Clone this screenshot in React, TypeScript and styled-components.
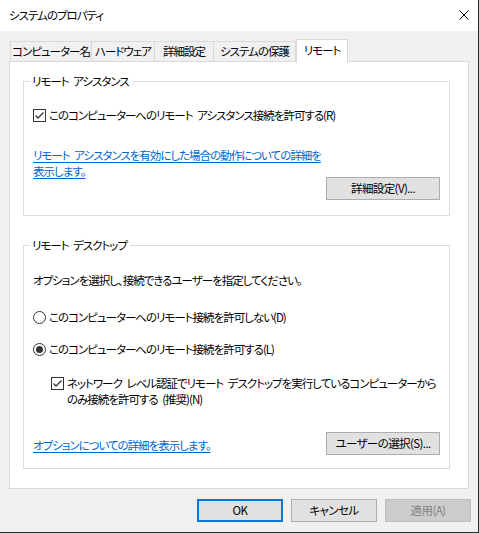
import React from "react";
import styled, { createGlobalStyle } from "styled-components";

const Global = createGlobalStyle`
  html, body { margin: 0; padding: 0; background: #2b2b2b; }
  body {
    font-family: "Noto Sans CJK JP", "Noto Sans", sans-serif;
    font-size: 11.5px;
    letter-spacing: -1px;
    word-spacing: 3px;
    font-feature-settings: "palt";
    -webkit-font-smoothing: antialiased;
  }
`;

const Window = styled.div`
  width: 478px;
  height: 532px;
  background: #f0f0f0;
  display: flex;
  flex-direction: column;
  color: #000;
  font-size: 11.5px;
  line-height: 16px;
`;

const TitleBar = styled.div`
  height: 31px;
  background: #fff;
  display: flex;
  align-items: center;
  justify-content: space-between;
  padding: 0 0 0 9px;
  box-sizing: border-box;
`;

const Title = styled.span`
  line-height: 16px;
  padding-bottom: 2px;
`;

const CloseButton = styled.div`
  width: 46px;
  height: 31px;
  display: flex;
  align-items: center;
  justify-content: center;
  margin-right: -9px;
  padding-bottom: 1px;
  box-sizing: border-box;
`;

const Body = styled.div`
  flex: 1;
  display: flex;
  flex-direction: column;
  padding: 8px 9px 0 9px;
`;

const TabStrip = styled.div`
  display: flex;
  align-items: flex-end;
  padding-left: 1px;
  height: 23px;
  position: relative;
  z-index: 1;
`;

const Tab = styled.div<{ $active?: boolean; $first?: boolean; $w: number }>`
  box-sizing: border-box;
  width: ${(p) => p.$w}px;
  height: ${(p) => (p.$active ? 24 : 21)}px;
  background: ${(p) => (p.$active ? "#fff" : "#f0f0f0")};
  border: 1px solid #d9d9d9;
  border-bottom: ${(p) => (p.$active ? "none" : "1px solid #d9d9d9")};
  border-left: ${(p) => (p.$first || p.$active ? "1px solid #d9d9d9" : "none")};
  display: flex;
  align-items: ${(p) => (p.$active ? "flex-start" : "center")};
  justify-content: center;
  padding: ${(p) => (p.$active ? "2px 0 0 0" : "0 0 1px 0")};
  margin-bottom: ${(p) => (p.$active ? "-1px" : "0")};
  white-space: nowrap;
`;

const Panel = styled.div`
  box-sizing: border-box;
  width: 460px;
  height: 428px;
  background: #fff;
  border: 1px solid #d9d9d9;
  margin-top: -1px;
  padding: 19px 18px 0 13px;
  display: flex;
  flex-direction: column;
`;

const Group = styled.div<{ $h: number; $pt: number; $mt?: number }>`
  position: relative;
  box-sizing: border-box;
  height: ${(p) => p.$h}px;
  margin-top: ${(p) => p.$mt ?? 0}px;
  border: 1px solid #dcdcdc;
  padding: ${(p) => p.$pt}px 9px 0 9px;
  display: flex;
  flex-direction: column;
`;

const Legend = styled.span`
  position: absolute;
  top: -9px;
  left: 6px;
  padding: 0 3px 0 2px;
  background: #fff;
  line-height: 16px;
`;

const OptionRow = styled.label<{ $mt?: number; $ml?: number }>`
  display: flex;
  align-items: flex-start;
  margin-top: ${(p) => p.$mt ?? 0}px;
  margin-left: ${(p) => p.$ml ?? 0}px;
  line-height: 16px;
  white-space: nowrap;
`;

const Mark = styled.span`
  flex: none;
  width: 13px;
  height: 13px;
  margin-top: 2px;
  margin-right: 3px;
  display: flex;
`;

const Text = styled.div<{ $mt?: number }>`
  margin-top: ${(p) => p.$mt ?? 0}px;
  line-height: 16px;
  white-space: nowrap;
`;

const Link = styled.a<{ $mt?: number }>`
  display: block;
  margin-top: ${(p) => p.$mt ?? 0}px;
  color: #0066cc;
  text-decoration: underline;
  text-underline-offset: 2px;
  line-height: 16px;
  white-space: nowrap;
  cursor: pointer;
`;

const RightRow = styled.div<{ $mt?: number }>`
  display: flex;
  justify-content: flex-end;
  margin-top: ${(p) => p.$mt ?? 0}px;
`;

const SpreadRow = styled.div<{ $mt?: number }>`
  display: flex;
  justify-content: space-between;
  align-items: center;
  margin-top: ${(p) => p.$mt ?? 0}px;
`;

const BottomLink = styled(Link)`
  margin-top: 3px;
`;

const Button = styled.button<{ $w: number; $primary?: boolean; $disabled?: boolean }>`
  box-sizing: border-box;
  width: ${(p) => p.$w}px;
  height: 23px;
  padding: 0 0 2px 0;
  font-family: inherit;
  font-size: 11.5px;
  letter-spacing: -0.6px;
  font-feature-settings: "palt";
  line-height: 16px;
  background: ${(p) => (p.$disabled ? "#cccccc" : "#e1e1e1")};
  color: ${(p) => (p.$disabled ? "#838383" : "#000")};
  border: ${(p) =>
    p.$primary ? "2px solid #0078d7" : p.$disabled ? "1px solid #bfbfbf" : "1px solid #adadad"};
  border-radius: 0;
  display: flex;
  align-items: center;
  justify-content: center;
`;

const Footer = styled.div`
  display: flex;
  justify-content: flex-end;
  gap: 8px;
  padding: 10px 7px 0 0;
  margin-right: -9px;
`;

const CheckBox = () => (
  <svg width="13" height="13" viewBox="0 0 13 13">
    <rect x="0.5" y="0.5" width="12" height="12" fill="#fff" stroke="#333" />
    <path d="M2.5 6.5 L5 9 L10.5 3.5" fill="none" stroke="#333" strokeWidth="1.3" />
  </svg>
);

const Radio = ({ on }: { on?: boolean }) => (
  <svg width="13" height="13" viewBox="0 0 13 13">
    <circle cx="6.5" cy="6.5" r="6" fill="#fff" stroke="#333" />
    {on && <circle cx="6.5" cy="6.5" r="3.5" fill="#333" />}
  </svg>
);

const CloseIcon = () => (
  <svg width="10" height="10" viewBox="0 0 10 10">
    <path d="M0.5 0.5 L9.5 9.5 M9.5 0.5 L0.5 9.5" stroke="#000" strokeWidth="1" />
  </svg>
);

export default function App() {
  return (
    <>
      <Global />
      <Window>
        <TitleBar>
          <Title>システムのプロパティ</Title>
          <CloseButton>
            <CloseIcon />
          </CloseButton>
        </TitleBar>
        <Body>
          <TabStrip>
            <Tab $w={82} $first>
              コンピューター名
            </Tab>
            <Tab $w={63}>ハードウェア</Tab>
            <Tab $w={59}>詳細設定</Tab>
            <Tab $w={82}>システムの保護</Tab>
            <Tab $w={52} $active>
              リモート
            </Tab>
          </TabStrip>
          <Panel>
            <Group $h={135} $pt={25}>
              <Legend>リモート アシスタンス</Legend>
              <OptionRow>
                <Mark>
                  <CheckBox />
                </Mark>
                このコンピューターへのリモート アシスタンス接続を許可する(R)
              </OptionRow>
              <Link $mt={24}>
                リモート アシスタンスを有効にした場合の動作についての詳細を
                <br />
                表示します。
              </Link>
              <RightRow $mt={-2}>
                <Button $w={114}>詳細設定(V)...</Button>
              </RightRow>
            </Group>
            <Group $h={224} $pt={26} $mt={29}>
              <Legend>リモート デスクトップ</Legend>
              <Text>オプションを選択し、接続できるユーザーを指定してください。</Text>
              <OptionRow $mt={21}>
                <Mark>
                  <Radio />
                </Mark>
                このコンピューターへのリモート接続を許可しない(D)
              </OptionRow>
              <OptionRow $mt={16}>
                <Mark>
                  <Radio on />
                </Mark>
                このコンピューターへのリモート接続を許可する(L)
              </OptionRow>
              <OptionRow $mt={18} $ml={18}>
                <Mark>
                  <CheckBox />
                </Mark>
                <span>
                  ネットワーク レベル認証でリモート デスクトップを実行しているコンピューターから
                  <br />
                  のみ接続を許可する (推奨)(N)
                </span>
              </OptionRow>
              <SpreadRow $mt={25}>
                <BottomLink>オプションについての詳細を表示します。</BottomLink>
                <Button $w={114}>ユーザーの選択(S)...</Button>
              </SpreadRow>
            </Group>
          </Panel>
          <Footer>
            <Button $w={86} $primary>
              OK
            </Button>
            <Button $w={86}>キャンセル</Button>
            <Button $w={86} $disabled>
              適用(A)
            </Button>
          </Footer>
        </Body>
      </Window>
    </>
  );
}
